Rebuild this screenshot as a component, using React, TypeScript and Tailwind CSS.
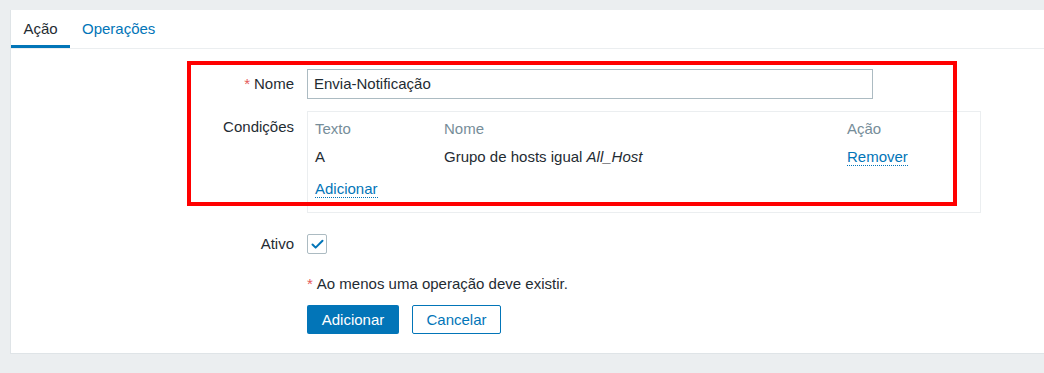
import { Check } from "lucide-react";

const font = { fontFamily: '"Liberation Sans", Arial, sans-serif' };

function Label({ children, required }: { children: React.ReactNode; required?: boolean }) {
  return (
    <div className="w-[296px] shrink-0 pr-[13px] text-right text-[#1f2c33]">
      {required && <span className="mr-[4px] text-[#e45959]">*</span>}
      {children}
    </div>
  );
}

export default function App() {
  return (
    <div className="min-h-[373px] bg-[#ebeef0] pl-[10px] pt-[10px] text-[15px] leading-[18px]" style={font}>
      <div className="relative h-[344px] border-b border-l border-[#dfe4e7] bg-white">
        <div className="flex h-[39px] border-b border-[#ebeef0]">
          <div className="flex w-[59px] items-center justify-center border-b-[3px] border-[#0275b8] pt-[2px] text-[#1f2c33]">
            Ação
          </div>
          <div className="flex items-center px-[12px] pb-[1px] text-[#0275b8]">Operações</div>
        </div>

        <div className="pt-[20px]">
          <div className="flex items-center">
            <Label required>Nome</Label>
            <div className="flex h-[30px] w-[566px] items-center border border-[#acbbc2] px-[6px] text-[#1f2c33]">
              Envia-Notificação
            </div>
          </div>

          <div className="mt-[12px] flex items-start">
            <div className="pt-[7px]">
              <Label>Condições</Label>
            </div>
            <div className="h-[102px] w-[674px] border border-[#ebeef0] px-[7px] pt-[8px]">
              <div className="grid grid-cols-[129px_403px_1fr] text-[#768d99]">
                <div>Texto</div>
                <div>Nome</div>
                <div>Ação</div>
              </div>
              <div className="mt-[10px] grid grid-cols-[129px_403px_1fr] text-[#1f2c33]">
                <div>A</div>
                <div>
                  Grupo de hosts igual <em>All_Host</em>
                </div>
                <div>
                  <span className="border-b border-dotted border-[#0275b8] text-[#0275b8]">Remover</span>
                </div>
              </div>
              <div className="mt-[14px]">
                <span className="border-b border-dotted border-[#0275b8] text-[#0275b8]">Adicionar</span>
              </div>
            </div>
          </div>

          <div className="mt-[21px] flex items-center">
            <Label>Ativo</Label>
            <div className="flex h-[20px] w-[20px] items-center justify-center rounded-[2px] border border-[#acbbc2]">
              <Check size={15} strokeWidth={3.2} color="#0275b8" />
            </div>
          </div>

          <div className="mt-[21px] pl-[296px] text-[#1f2c33]">
            <span className="mr-[4px] text-[#e45959]">*</span>Ao menos uma operação deve existir.
          </div>

          <div className="mt-[12px] flex gap-[13px] pl-[296px]">
            <button className="h-[29px] w-[92px] rounded-[2px] bg-[#0275b8] text-white">Adicionar</button>
            <button className="h-[29px] w-[89px] rounded-[2px] border border-[#0275b8] bg-white text-[#0275b8]">
              Cancelar
            </button>
          </div>
        </div>

        <div className="pointer-events-none absolute left-[176px] top-[51px] h-[145px] w-[770px] border-[4px] border-[#ff0000]" />
      </div>
    </div>
  );
}
